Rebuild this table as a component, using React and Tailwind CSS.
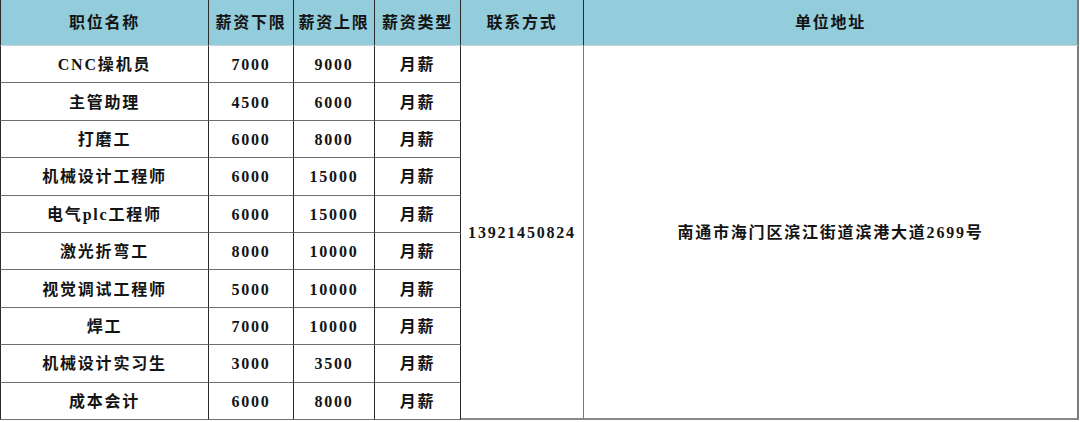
const jobs = [
  { name: "CNC操机员", min: "7000", max: "9000" },
  { name: "主管助理", min: "4500", max: "6000" },
  { name: "打磨工", min: "6000", max: "8000" },
  { name: "机械设计工程师", min: "6000", max: "15000" },
  { name: "电气plc工程师", min: "6000", max: "15000" },
  { name: "激光折弯工", min: "8000", max: "10000" },
  { name: "视觉调试工程师", min: "5000", max: "10000" },
  { name: "焊工", min: "7000", max: "10000" },
  { name: "机械设计实习生", min: "3000", max: "3500" },
  { name: "成本会计", min: "6000", max: "8000" },
];

const font = {
  fontFamily: '"Liberation Serif", "Noto Sans CJK SC", serif',
};

function HeadCell({ children, last, className = "" }) {
  return (
    <div
      className={`flex items-center justify-center bg-[#93cddc] border-b border-b-[#c9d3d6] ${
        last ? "border-r-2 border-r-[#7a7a7a]" : "border-r border-r-[#2b2b2b]"
      } ${className}`}
    >
      {children}
    </div>
  );
}

function Cell({ children, className = "" }) {
  return (
    <div
      className={`flex items-center justify-center pt-[2px] border-b border-b-[#6f6f6f] border-r border-r-[#2b2b2b] ${className}`}
    >
      {children}
    </div>
  );
}

export default function App() {
  return (
    <div className="w-[1080px] h-[422px] bg-white overflow-hidden">
      <div
        className="grid grid-cols-[209px_85px_81px_86px_123px_495px] grid-rows-[46px_repeat(10,37.4px)] text-[16px] font-bold tracking-[1.8px] text-[#141414]"
        style={font}
      >
        <HeadCell className="border-l border-l-[#2b2b2b]">职位名称</HeadCell>
        <HeadCell>薪资下限</HeadCell>
        <HeadCell>薪资上限</HeadCell>
        <HeadCell>薪资类型</HeadCell>
        <HeadCell>联系方式</HeadCell>
        <HeadCell last>单位地址</HeadCell>

        {jobs.map((job, i) => (
          <div key={job.name} className="contents">
            <Cell className="border-l border-l-[#2b2b2b]">{job.name}</Cell>
            <Cell>{job.min}</Cell>
            <Cell>{job.max}</Cell>
            <Cell>月薪</Cell>
            {i === 0 && (
              <>
                <div className="row-span-10 flex items-center justify-center pt-[2px] border-b-2 border-b-[#8a8a8a] border-r border-r-[#7a7a7a]">
                  13921450824
                </div>
                <div className="row-span-10 flex items-center justify-center pt-[2px] border-b-2 border-b-[#8a8a8a] border-r-2 border-r-[#7a7a7a]">
                  南通市海门区滨江街道滨港大道2699号
                </div>
              </>
            )}
          </div>
        ))}
      </div>
    </div>
  );
}
